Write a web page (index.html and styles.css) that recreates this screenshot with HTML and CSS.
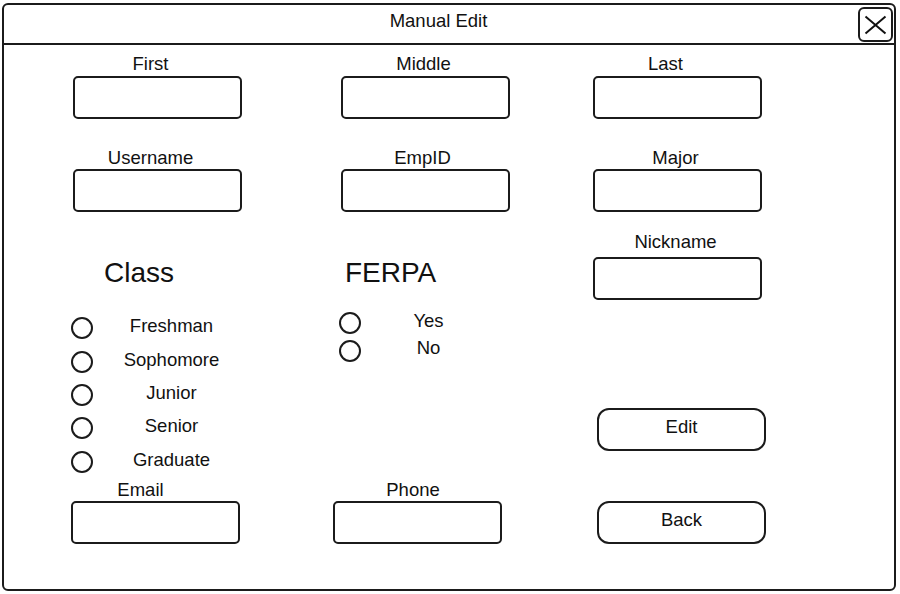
FILE: index.html
```html
<!DOCTYPE html>
<html lang="en">
<head>
    <meta charset="UTF-8">
    <meta name="viewport" content="width=device-width, initial-scale=1.0">
    <title>Manual Edit</title>
    <link rel="stylesheet" href="styles.css">
</head>
<body>
    <div class="window">
        <div class="titlebar">
            <div class="title">Manual Edit</div>
            <button class="close-btn" aria-label="Close">
                <svg width="35" height="35" viewBox="0 0 35 35">
                    <path d="M7.5 9.5 L27.5 26.5 M27.5 9.5 L7.5 26.5" stroke="#111" stroke-width="2" fill="none"/>
                </svg>
            </button>
        </div>

        <div class="form">
            <!-- names -->
            <div class="row row-top">
                <div class="field">
                    <label class="label nudge-7">First</label>
                    <input class="input" type="text">
                </div>
                <div class="field">
                    <label class="label nudge-2">Middle</label>
                    <input class="input" type="text">
                </div>
                <div class="field">
                    <label class="label nudge-12">Last</label>
                    <input class="input" type="text">
                </div>
            </div>

            <div class="row row-top row-second">
                <div class="field">
                    <label class="label nudge-7">Username</label>
                    <input class="input" type="text">
                </div>
                <div class="field">
                    <label class="label nudge-3">EmpID</label>
                    <input class="input" type="text">
                </div>
                <div class="field">
                    <label class="label nudge-2">Major</label>
                    <input class="input" type="text">
                </div>
            </div>

            <!-- class / ferpa / nickname -->
            <div class="row row-mid">
                <div class="group group-class">
                    <div class="group-title">Class</div>
                    <div class="radio-list">
                        <div class="radio"><span class="radio-dot"></span><span class="radio-text">Freshman</span></div>
                        <div class="radio"><span class="radio-dot"></span><span class="radio-text">Sophomore</span></div>
                        <div class="radio"><span class="radio-dot"></span><span class="radio-text">Junior</span></div>
                        <div class="radio"><span class="radio-dot"></span><span class="radio-text">Senior</span></div>
                        <div class="radio"><span class="radio-dot"></span><span class="radio-text">Graduate</span></div>
                    </div>
                </div>
                <div class="group group-ferpa">
                    <div class="group-title">FERPA</div>
                    <div class="radio-list">
                        <div class="radio"><span class="radio-dot"></span><span class="radio-text">Yes</span></div>
                        <div class="radio"><span class="radio-dot"></span><span class="radio-text">No</span></div>
                    </div>
                </div>
                <div class="side">
                    <div class="field field-nick">
                        <label class="label nudge-2">Nickname</label>
                        <input class="input" type="text">
                    </div>
                    <button class="btn btn-edit">Edit</button>
                </div>
            </div>

            <!-- contact -->
            <div class="row row-bottom">
                <div class="field">
                    <label class="label nudge-15">Email</label>
                    <input class="input" type="text">
                </div>
                <div class="field">
                    <label class="label nudge-4">Phone</label>
                    <input class="input" type="text">
                </div>
                <button class="btn">Back</button>
            </div>
        </div>
    </div>
</body>
</html>
```

FILE: styles.css
```css
* {
    margin: 0;
    padding: 0;
    box-sizing: border-box;
}

body {
    background: #fff;
    font-family: "Liberation Sans", Arial, sans-serif;
    color: #111;
    font-size: 18.5px;
}

.window {
    margin: 3px 0 0 2px;
    width: 894px;
    height: 588px;
    border: 2px solid #1b1b1b;
    border-radius: 6px;
}

.titlebar {
    height: 40px;
    border-bottom: 2px solid #1b1b1b;
    display: flex;
    align-items: center;
}

.title {
    flex: 1;
    text-align: center;
    padding-left: 15px;
    padding-bottom: 6px;
    line-height: 20px;
}

.close-btn {
    width: 35px;
    height: 35px;
    margin-right: 1px;
    margin-top: 1px;
    border: 2px solid #1b1b1b;
    border-radius: 6px;
    background: #fff;
    display: flex;
    align-items: center;
    justify-content: center;
}

.close-btn svg {
    flex: none;
}

.form {
    padding-top: 9px;
}

.row {
    display: grid;
}

.row-top {
    padding-left: 69px;
    grid-template-columns: 268px 252px 169px;
}

.row-second {
    margin-top: 29px;
}

.row-second .label {
    margin-bottom: 1px;
}

.field {
    display: flex;
    flex-direction: column;
    width: 169px;
}

.label {
    display: block;
    text-align: center;
    line-height: 20px;
    margin-bottom: 2px;
}

.nudge-2 { padding-right: 4px; }
.nudge-3 { padding-right: 6px; }
.nudge-4 { padding-right: 9px; }
.nudge-7 { padding-right: 14px; }
.nudge-12 { padding-right: 24px; }
.nudge-15 { padding-right: 30px; }

.input {
    width: 169px;
    height: 43px;
    border: 2px solid #1b1b1b;
    border-radius: 5px;
    background: #fff;
    font: inherit;
    padding: 0 8px;
    outline: none;
}

.row-mid {
    padding-left: 67px;
    grid-template-columns: 268px 254px 180px;
}

.group-title {
    margin-top: 45px;
    font-size: 28px;
    line-height: 32px;
}

.group-class .group-title {
    padding-left: 33px;
}

.group-ferpa .group-title {
    padding-left: 6px;
}

.group-class .radio-list {
    margin-top: 22.6px;
}

.group-ferpa .radio-list {
    margin-top: 20.6px;
}

.radio {
    display: flex;
    align-items: center;
    height: 33.35px;
}

.group-ferpa .radio {
    height: 27.4px;
}

.radio-dot {
    width: 22px;
    height: 22px;
    border: 2px solid #1b1b1b;
    border-radius: 50%;
    flex: none;
}

.radio-text {
    margin-left: 10px;
    width: 137px;
    text-align: center;
    line-height: 20px;
    padding-bottom: 4px;
}

.group-ferpa .radio-text {
    width: 115px;
    padding-bottom: 5px;
}

.side {
    display: flex;
    flex-direction: column;
}

.field-nick {
    margin-top: 20px;
}

.field-nick .label {
    margin-bottom: 5px;
}

.btn {
    width: 169px;
    height: 43px;
    border: 2px solid #1b1b1b;
    border-radius: 12px;
    background: #fff;
    font: inherit;
    color: #111;
    line-height: 20px;
    padding-bottom: 6px;
}

.btn-edit {
    margin-top: 108px;
    margin-left: 4px;
}

.row-bottom {
    margin-top: 2px;
    padding-left: 67px;
    grid-template-columns: 262px 264px 169px;
    align-items: end;
}

.row-bottom .label {
    margin-bottom: 1px;
}
```
